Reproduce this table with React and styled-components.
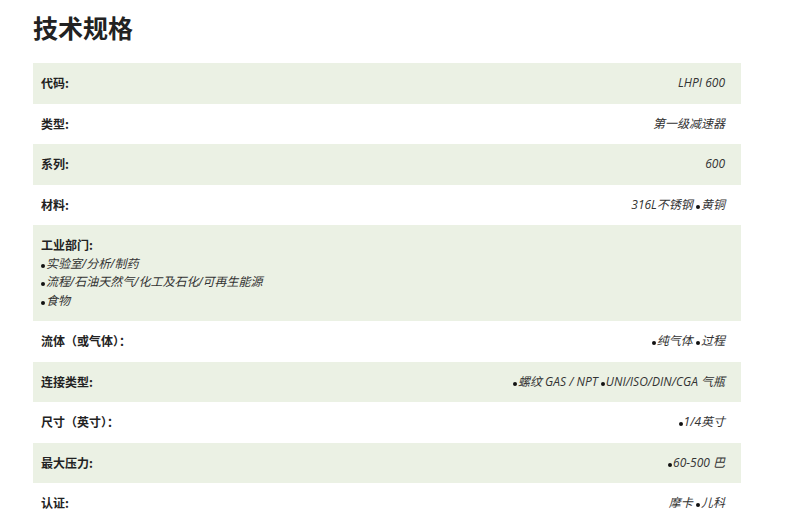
import React from 'react'
import styled, { createGlobalStyle } from 'styled-components'

const GlobalStyle = createGlobalStyle`
  body {
    margin: 0;
    background: #fff;
    font-family: "Open Sans", "Noto Sans CJK SC", sans-serif;
    color: #333;
  }
`

const Page = styled.div`
  padding: 9px 0 0 33px;
  width: 708px;
`

const Title = styled.h2`
  margin: 0 0 17px 0;
  font-family: "Noto Sans CJK SC", sans-serif;
  font-size: 25px;
  line-height: 37px;
  font-weight: 700;
  color: #222;
`

const Table = styled.div`
  display: flex;
  flex-direction: column;
`

const Row = styled.div`
  display: flex;
  justify-content: space-between;
  align-items: flex-start;
  padding: 11px 16px 11px 8px;
  background: ${p => (p.$shaded ? '#ebf1e4' : '#fff')};
  font-size: 12px;
  line-height: 18.5px;
`

const Label = styled.div`
  font-weight: 700;
  color: #222;
  font-family: "Noto Sans CJK SC", sans-serif;
  height: 18.5px;
`

const Value = styled.div`
  font-style: italic;
  color: #333;
  text-align: right;
  height: 18.5px;
  white-space: nowrap;
`

const Block = styled.div`
  display: flex;
  flex-direction: column;
`

const Item = styled.div`
  font-style: italic;
  color: #333;
  height: 18.5px;
`

const Bullet = styled.span`
  display: inline-block;
  width: 4px;
  height: 4px;
  border-radius: 50%;
  background: #111;
  margin: 0 1px 0 0;
  vertical-align: 0;
`

// "•" in the data marks a black dot
const withBullets = text =>
  text.split('•').map((part, i) => (
    <React.Fragment key={i}>
      {i > 0 && <Bullet />}
      {part}
    </React.Fragment>
  ))

const rows = [
  ['代码:', 'LHPI 600'],
  ['类型:', '第一级减速器'],
  ['系列:', '600'],
  ['材料:', '316L不锈钢 •黄铜'],
  ['工业部门:', null, ['•实验室/分析/制药', '•流程/石油天然气/化工及石化/可再生能源', '•食物']],
  ['流体（或气体）：', '•纯气体 •过程'],
  ['连接类型:', '•螺纹 GAS / NPT •UNI/ISO/DIN/CGA 气瓶'],
  ['尺寸（英寸）：', '•1/4英寸'],
  ['最大压力:', '•60-500 巴'],
  ['认证:', '摩卡 •儿科'],
]

export default function App() {
  return (
    <>
      <GlobalStyle />
      <Page>
        <Title>技术规格</Title>
        <Table>
          {rows.map(([label, value, list], i) => (
            <Row key={label} $shaded={i % 2 === 0}>
              {list ? (
                <Block>
                  <Label>{label}</Label>
                  {list.map(t => <Item key={t}>{withBullets(t)}</Item>)}
                </Block>
              ) : (
                <>
                  <Label>{label}</Label>
                  <Value>{withBullets(value)}</Value>
                </>
              )}
            </Row>
          ))}
        </Table>
      </Page>
    </>
  )
}
